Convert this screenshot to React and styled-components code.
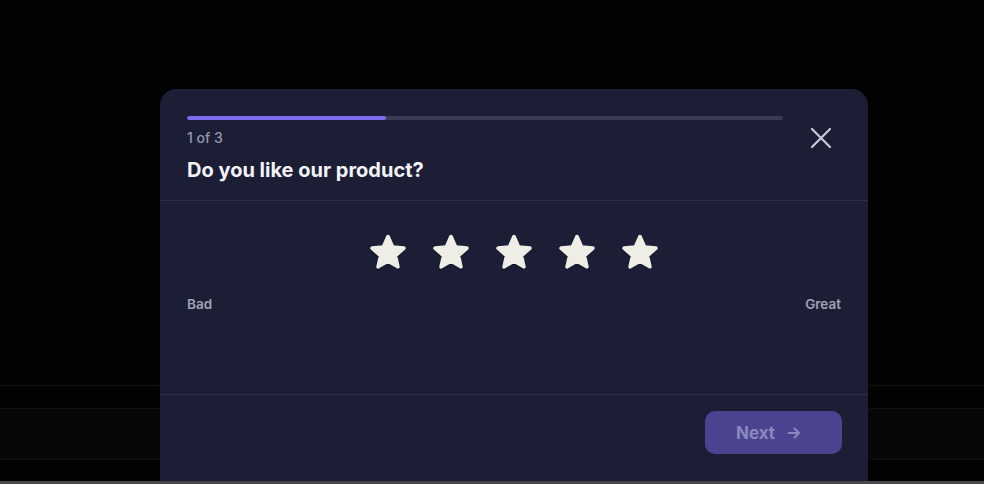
import React, { useState } from 'react';
import styled, { createGlobalStyle } from 'styled-components';

const GlobalStyle = createGlobalStyle`
  html, body {
    margin: 0;
    padding: 0;
    background: #020203;
  }
  body {
    font-family: Inter, "Noto Sans", "Liberation Sans", sans-serif;
    -webkit-font-smoothing: antialiased;
  }
`;

const Page = styled.div`
  position: relative;
  width: 984px;
  height: 484px;
  overflow: hidden;
  display: flex;
  flex-direction: column;
  background: #020203;
`;

const Backdrop = styled.div`
  display: flex;
  flex-direction: column;
  flex: 1;
  padding-top: 385px;
`;

const Rule = styled.div`
  height: 1px;
  background: #131315;
`;

const Band = styled.div`
  margin-top: 22px;
  height: 50px;
  background: #070709;
  border-top: 1px solid #111113;
  border-bottom: 1px solid #0f0f11;
`;

const WindowEdge = styled.div`
  position: absolute;
  left: 0;
  right: 0;
  bottom: 0;
  height: 3px;
  background: #48484a;
  z-index: 5;
`;

const Modal = styled.div`
  position: absolute;
  top: 89px;
  left: 160px;
  width: 708px;
  bottom: 0;
  background: #1c1e36;
  border-radius: 16px 16px 0 0;
  display: flex;
  flex-direction: column;
`;

const Header = styled.div`
  display: flex;
  gap: 18px;
  padding: 27px 27px 17px;
  border-bottom: 1px solid #2c2e48;
`;

const HeaderMain = styled.div`
  flex: 1;
  display: flex;
  flex-direction: column;
`;

const Track = styled.div`
  height: 4px;
  border-radius: 2px;
  background: #3a3c56;
  overflow: hidden;
`;

const Fill = styled.div`
  height: 100%;
  border-radius: 2px;
  background: #7b6cf0;
`;

const Count = styled.div`
  margin-top: 9px;
  font-size: 14px;
  line-height: 17px;
  font-weight: 500;
  color: #9798ae;
`;

const Title = styled.h2`
  margin: 11px 0 0;
  font-size: 20px;
  line-height: 26px;
  font-weight: 700;
  color: #f4f4f8;
`;

const CloseButton = styled.button`
  width: 40px;
  height: 40px;
  margin-top: 2px;
  padding: 0;
  border: none;
  background: transparent;
  display: flex;
  align-items: center;
  justify-content: center;
  cursor: pointer;
  color: #c9c9d6;
`;

const Body = styled.div`
  height: 194px;
  padding: 31px 27px 0;
  box-sizing: border-box;
  border-bottom: 1px solid #2c2e48;
  display: flex;
  flex-direction: column;
`;

const Stars = styled.div`
  display: flex;
  justify-content: center;
`;

const StarButton = styled.button`
  width: 63px;
  height: 40px;
  padding: 0;
  border: none;
  background: transparent;
  display: flex;
  align-items: center;
  justify-content: center;
  cursor: pointer;
  color: ${p => (p.$active ? '#7b6cf0' : '#efeee6')};
`;

const Scale = styled.div`
  margin-top: 24px;
  display: flex;
  justify-content: space-between;
  font-size: 13.5px;
  line-height: 16px;
  font-weight: 600;
  color: #a2a2b6;
`;

const Footer = styled.div`
  display: flex;
  justify-content: flex-end;
  padding: 16px 26px;
`;

const NextButton = styled.button`
  height: 43px;
  width: 137px;
  padding: 0 0 0 31px;
  border: none;
  border-radius: 10px;
  background: #4a4490;
  color: #8c88bd;
  font-family: inherit;
  font-size: 17px;
  font-weight: 700;
  display: flex;
  align-items: center;
  gap: 12px;
  cursor: default;
`;

const CloseIcon = () => (
  <svg width="20" height="20" viewBox="0 0 20 20" fill="none">
    <path d="M1 1 L19 19 M19 1 L1 19" stroke="currentColor" strokeWidth="2.2" strokeLinecap="round" />
  </svg>
);

const StarIcon = () => (
  <svg width="40" height="39" viewBox="0 0 40 39">
    <defs>
      <filter id="starShade" x="-20%" y="-20%" width="140%" height="140%">
        <feDropShadow dx="0" dy="1" stdDeviation="0.8" floodColor="#000" floodOpacity="0.35" />
      </filter>
    </defs>
    <path
      d="M20 3.6 L24.6 14 L35.9 15.1 L27.4 22.6 L29.9 33.8 L20 28 L10.1 33.8 L12.6 22.6 L4.1 15.1 L15.4 14 Z"
      fill="currentColor"
      stroke="currentColor"
      strokeWidth="3.6"
      strokeLinejoin="round"
      filter="url(#starShade)"
    />
  </svg>
);

const ArrowIcon = () => (
  <svg width="14" height="14" viewBox="0 0 14 14" fill="none">
    <path d="M1.5 7 H12 M7.5 2.5 L12 7 L7.5 11.5" stroke="currentColor" strokeWidth="1.9" strokeLinecap="round" strokeLinejoin="round" />
  </svg>
);

export default function App() {
  const [rating, setRating] = useState(0);
  const step = 1;
  const total = 3;

  return (
    <Page>
      <GlobalStyle />
      <Backdrop>
        <Rule />
        <Band />
      </Backdrop>
      <Modal>
        <Header>
          <HeaderMain>
            <Track>
              <Fill style={{ width: `${(step / total) * 100}%` }} />
            </Track>
            <Count>{step} of {total}</Count>
            <Title>Do you like our product?</Title>
          </HeaderMain>
          <CloseButton aria-label="Close">
            <CloseIcon />
          </CloseButton>
        </Header>
        <Body>
          <Stars>
            {[1, 2, 3, 4, 5].map(n => (
              <StarButton key={n} $active={n <= rating} onClick={() => setRating(n)} aria-label={`${n} stars`}>
                <StarIcon />
              </StarButton>
            ))}
          </Stars>
          <Scale>
            <span>Bad</span>
            <span>Great</span>
          </Scale>
        </Body>
        <Footer>
          <NextButton disabled={!rating}>
            Next
            <ArrowIcon />
          </NextButton>
        </Footer>
      </Modal>
      <WindowEdge />
    </Page>
  );
}
